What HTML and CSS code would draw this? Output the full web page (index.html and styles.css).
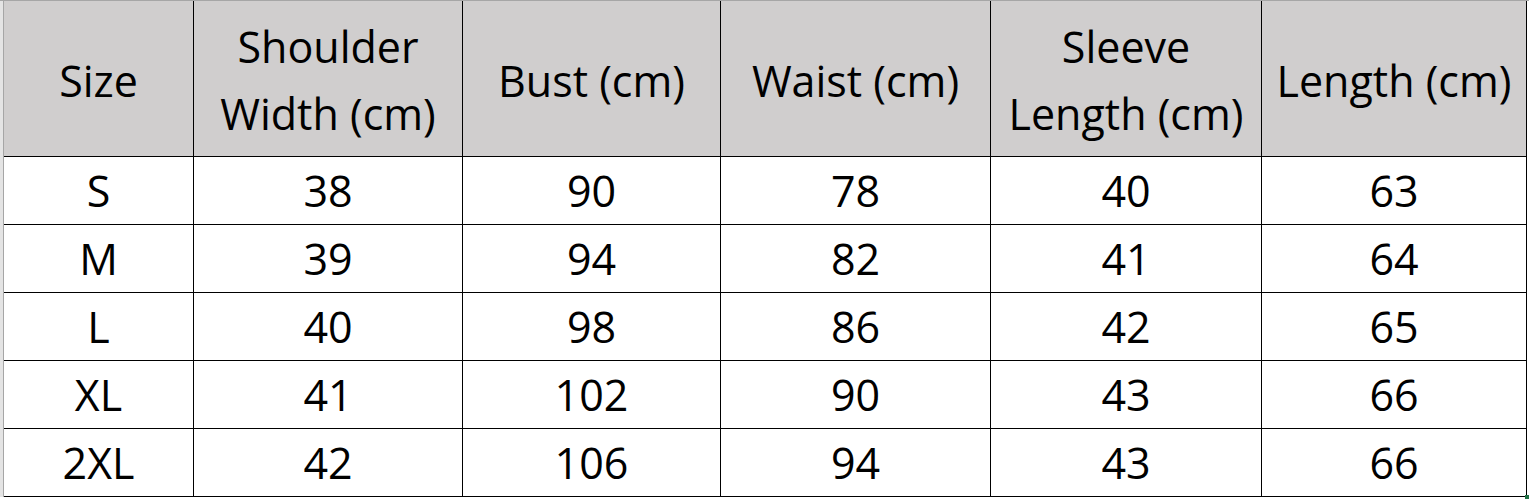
FILE: index.html
```html
<!DOCTYPE html>
<html lang="en">
<head>
<meta charset="utf-8">
<title>Size Chart</title>
<link rel="stylesheet" href="styles.css">
</head>
<body>
<div class="sheet">
  <div class="grid">
    <div class="cell head">Size</div>
    <div class="cell head">Shoulder<br>Width (cm)</div>
    <div class="cell head">Bust (cm)</div>
    <div class="cell head">Waist (cm)</div>
    <div class="cell head">Sleeve<br>Length (cm)</div>
    <div class="cell head">Length (cm)</div>

    <div class="cell">S</div><div class="cell">38</div><div class="cell">90</div><div class="cell">78</div><div class="cell">40</div><div class="cell">63</div>
    <div class="cell">M</div><div class="cell">39</div><div class="cell">94</div><div class="cell">82</div><div class="cell">41</div><div class="cell">64</div>
    <div class="cell">L</div><div class="cell">40</div><div class="cell">98</div><div class="cell">86</div><div class="cell">42</div><div class="cell">65</div>
    <div class="cell">XL</div><div class="cell">41</div><div class="cell">102</div><div class="cell">90</div><div class="cell">43</div><div class="cell">66</div>
    <div class="cell">2XL</div><div class="cell">42</div><div class="cell">106</div><div class="cell">94</div><div class="cell">43</div><div class="cell">66</div>
  </div>
  <div class="handle"></div>
</div>
</body>
</html>
```

FILE: styles.css
```css
html, body {
  margin: 0;
  padding: 0;
  background: #ffffff;
}

body {
  width: 1529px;
  height: 499px;
  overflow: hidden;
  font-family: "Open Sans", "Noto Sans", sans-serif;
  color: #000000;
}

.sheet {
  position: relative;
  border-top: 1px solid #a6a6a6;
  padding-left: 3px;
  background: linear-gradient(to right, #e4e4e4 0, #e4e4e4 3px, transparent 3px);
}

.grid {
  display: grid;
  grid-template-columns: 190px 269px 258px 270px 271px 265px;
  grid-template-rows: 156px repeat(5, 68px);
  border-left: 1px solid #a6a6a6;
  width: max-content;
}

.cell {
  display: flex;
  align-items: center;
  justify-content: center;
  text-align: center;
  border-right: 1px solid #000000;
  border-bottom: 1px solid #000000;
  font-size: 43px;
  line-height: 58px;
  padding-top: 1px;
}

.head {
  background: #d0cece;
  line-height: 67px;
  padding-top: 3px;
}

.handle {
  position: absolute;
  left: 1525px;
  top: 494px;
  width: 4px;
  height: 4px;
  background: #217346;
}
```
